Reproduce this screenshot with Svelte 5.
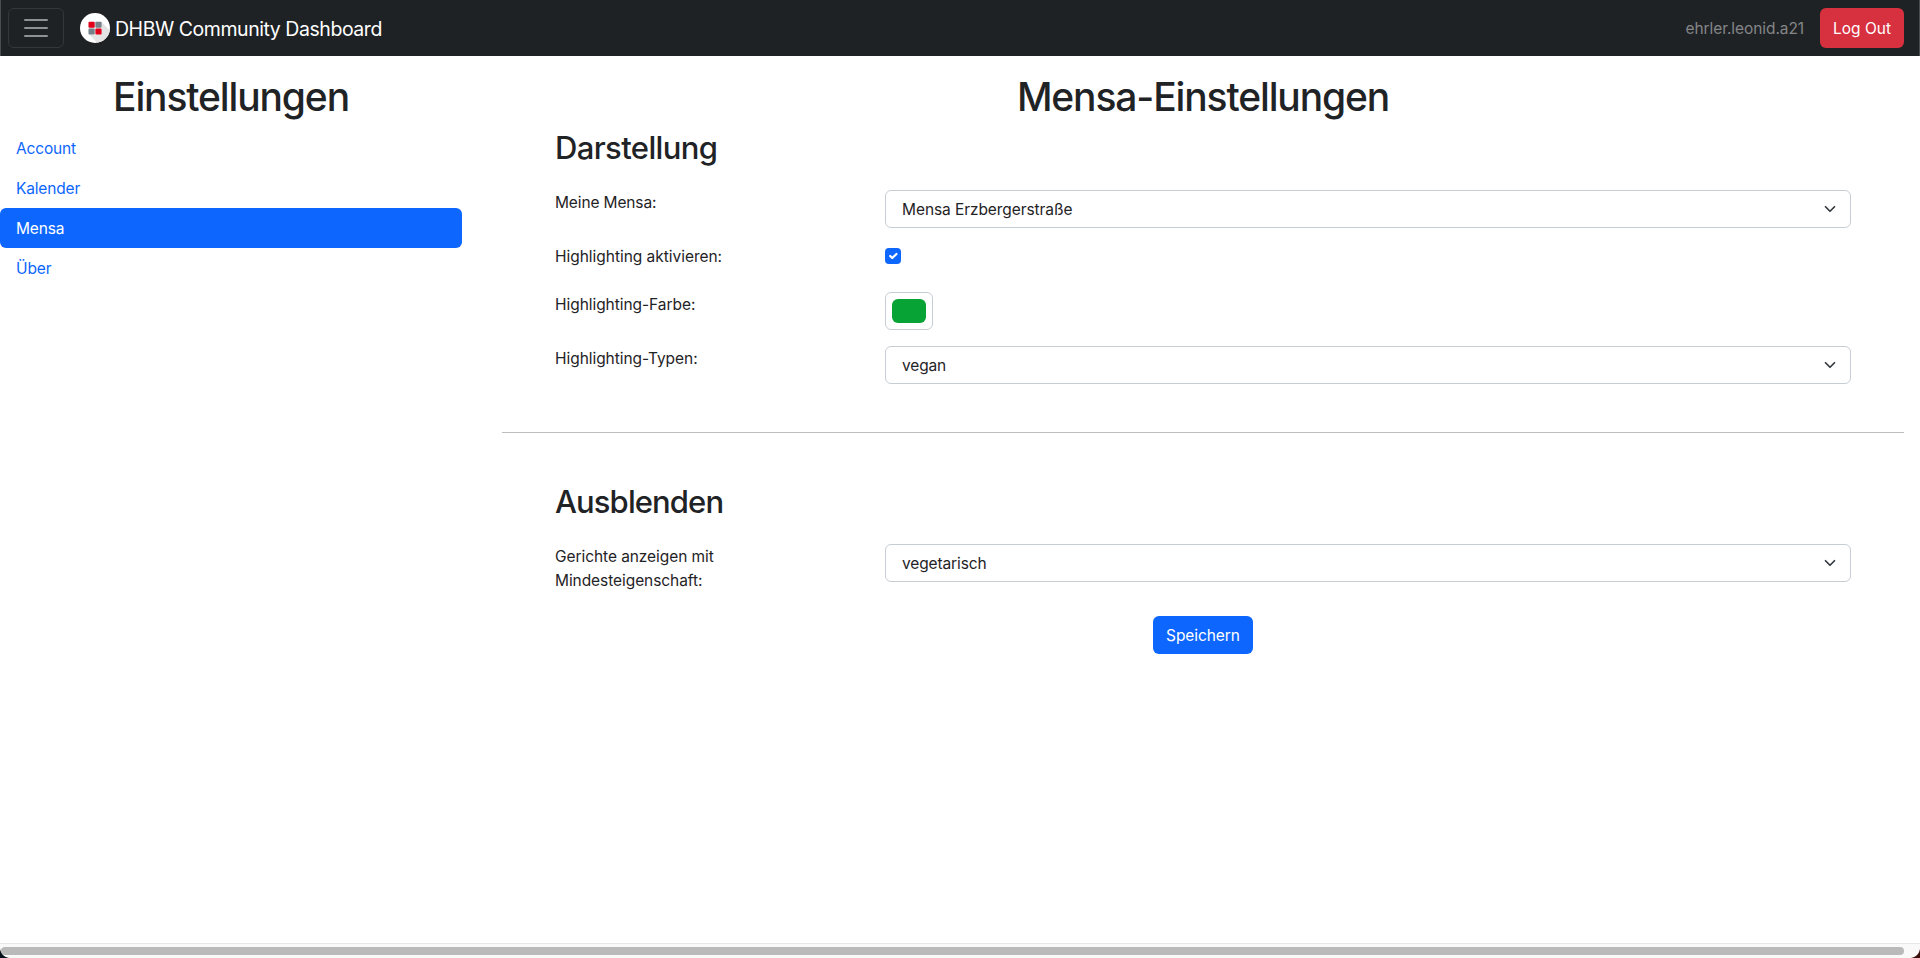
<script>
  const nav = [
    { label: 'Account', ls: -0.16 },
    { label: 'Kalender', ls: -0.17 },
    { label: 'Mensa', ls: -0.18, active: true },
    { label: 'Über', ls: -0.12 }
  ];
</script>

{#snippet select(value, ls)}
  <div class="select" role="combobox" aria-expanded="false" aria-controls="none" tabindex="0">
    <span style="letter-spacing:{ls}px">{value}</span>
    <svg width="16" height="12" viewBox="0 0 16 16" aria-hidden="true">
      <path d="m2 5 6 6 6-6" fill="none" stroke="#343a40" stroke-width="2.3" stroke-linecap="round" stroke-linejoin="round" />
    </svg>
  </div>
{/snippet}

{#snippet label(text, ls)}
  <div class="label" style="letter-spacing:{ls}px">{text}</div>
{/snippet}

<div class="page">
  <header>
    <button class="toggler" aria-label="Menu">
      <svg width="30" height="30" viewBox="0 0 30 30">
        <path d="M4 7h22M4 15h22M4 23h22" stroke="#8f9192" stroke-width="2" stroke-linecap="round" stroke-miterlimit="10" />
      </svg>
    </button>
    <a class="brand" href="#top">
      <svg width="30" height="30" viewBox="0 0 30 30">
        <defs><clipPath id="disc"><circle cx="15" cy="15" r="15" /></clipPath></defs>
        <circle cx="15" cy="15" r="15" fill="#fff" />
        <path clip-path="url(#disc)" d="M21.5 9 L36 23.5 V36 H23.5 L9 21.5Z" fill="#e4e4e4" />
        <rect x="8.6" y="8.8" width="12.9" height="12.6" rx="1" fill="#f1eeee" />
        <rect x="8.5" y="8.7" width="6.2" height="6" rx="1" fill="#e2001a" />
        <rect x="15.4" y="8.7" width="6.2" height="6" rx="1" fill="#76818a" />
        <rect x="8.5" y="15.4" width="6.2" height="6" rx="1" fill="#76818a" />
        <rect x="15.4" y="15.4" width="6.2" height="6" rx="1" fill="#e2001a" />
      </svg>
      <span>DHBW Community Dashboard</span>
    </a>
    <span class="user">ehrler.leonid.a21</span>
    <button class="btn logout">Log Out</button>
  </header>

  <div class="body">
    <aside>
      <h1>Einstellungen</h1>
      <nav>
        {#each nav as item}
          <a href="#{item.label}" class:active={item.active} style="letter-spacing:{item.ls}px">{item.label}</a>
        {/each}
      </nav>
    </aside>

    <main>
      <h1>Mensa-Einstellungen</h1>
      <section>
        <h2>Darstellung</h2>
        <div class="row">
          {@render label('Meine Mensa:', -0.13)}
          {@render select('Mensa Erzbergerstraße', -0.08)}
        </div>
        <div class="row">
          {@render label('Highlighting aktivieren:', -0.03)}
          <div class="check">
            <svg width="16" height="16" viewBox="0 0 20 20">
              <path d="m6.5 10 2.6 2.6 5.2-5.2" fill="none" stroke="#fff" stroke-width="2.8" stroke-linecap="round" stroke-linejoin="round" />
            </svg>
          </div>
        </div>
        <div class="row">
          {@render label('Highlighting-Farbe:', -0.05)}
          <div class="color"><span></span></div>
        </div>
        <div class="row">
          {@render label('Highlighting-Typen:', -0.05)}
          {@render select('vegan', -0.14)}
        </div>
      </section>
      <hr />
      <section>
        <h2 class="hide">Ausblenden</h2>
        <div class="row">
          {@render label('Gerichte anzeigen mit Mindesteigenschaft:', -0.07)}
          {@render select('vegetarisch', -0.12)}
        </div>
      </section>
      <button class="btn save">Speichern</button>
    </main>
  </div>

  <footer><div class="thumb"></div></footer>
  <i class="corner left"></i>
  <i class="corner right"></i>
</div>

<style>
  :global(body) { margin: 0; background: #fff; }
  .page {
    position: relative;
    display: flex;
    flex-direction: column;
    height: 958px;
    overflow: hidden;
    color: #1f2326;
    font: 400 15.5px/24px Inter, sans-serif;
  }
  .page, .page * { box-sizing: border-box; }
  a { text-decoration: none; }
  button { font: inherit; margin: 0; cursor: pointer; }

  header {
    display: flex;
    align-items: center;
    height: 56px;
    padding: 0 16px 0 7px;
    background: #1f2225;
    border-left: 1px solid #4b4e50;
    border-right: 1px solid #4b4e50;
  }
  .toggler {
    display: flex;
    justify-content: center;
    align-items: center;
    width: 56px;
    height: 40px;
    padding: 0;
    background: transparent;
    border: 1px solid #35383b;
    border-radius: 6px;
  }
  .brand {
    display: flex;
    align-items: center;
    gap: 5px;
    margin-left: 16px;
    color: #fff;
    font-size: 19.5px;
    line-height: 30px;
    letter-spacing: -0.45px;
  }
  .brand span { padding-top: 2px; }
  .user {
    margin-left: auto;
    padding-top: 2px;
    color: #848688;
    letter-spacing: -0.08px;
  }
  .btn {
    display: block;
    padding: 2px 0 0;
    border: 1px solid transparent;
    border-radius: 6px;
    color: #fff;
    white-space: nowrap;
  }
  .logout {
    width: 84px;
    height: 40px;
    margin-left: 16px;
    margin-right: -1px;
    background: #d7303f;
  }

  .body { display: flex; flex: 1; }
  aside { width: 462px; padding-top: 16px; }
  h1, h2 { margin: 0; font-weight: 500; }
  h1 {
    height: 56px;
    padding-top: 1px;
    font-size: 39px;
    line-height: 48px;
    text-align: center;
    letter-spacing: -1.14px;
  }
  nav { display: flex; flex-direction: column; }
  nav a {
    height: 40px;
    padding: 9px 16px 7px;
    color: #0d66fd;
    border-radius: 6px;
  }
  nav a.active { background: #0d66fd; color: #fff; }

  main {
    flex: 1;
    margin: 0 16px 0 40px;
    padding-top: 16px;
  }
  section { padding: 0 53px; }
  h2 {
    height: 62px;
    padding-top: 1px;
    font-size: 31px;
    line-height: 38px;
    letter-spacing: -0.62px;
  }
  .hide { letter-spacing: -0.9px; }
  .row {
    display: grid;
    grid-template-columns: 180px 966px;
    justify-content: space-between;
    margin-bottom: 16px;
  }
  .label { padding-top: 1px; }
  .select {
    display: flex;
    justify-content: space-between;
    align-items: center;
    height: 38px;
    padding: 0 12px 0 16px;
    background: #fff;
    border: 1px solid #c7cdd4;
    border-radius: 6px;
  }
  .select span { padding-top: 2px; }
  .check {
    width: 16px;
    height: 16px;
    margin: 4px 0 12px;
    border-radius: 4px;
    background: #0d66fd;
  }
  .check svg { display: block; }
  .color {
    width: 48px;
    height: 38px;
    padding: 6px;
    border: 1px solid #c7cdd4;
    border-radius: 6px;
  }
  .color span {
    display: block;
    height: 24px;
    border-radius: 6px;
    background: #08a335;
  }
  hr {
    height: 1px;
    margin: 48px 0 49px;
    border: 0;
    background: #bcbdbe;
  }
  .row:last-child { margin-bottom: 0; }
  .save {
    width: 100px;
    height: 38px;
    margin: 23px auto 0;
    background: #0d66fd;
    letter-spacing: -0.08px;
  }

  footer {
    height: 15px;
    padding: 3px 16px 0 1px;
    background: #f9f9f9;
    border-top: 1px solid #e7e7e7;
  }
  .thumb {
    height: 8px;
    border-radius: 4px;
    background: #bababa;
  }
  .corner {
    position: absolute;
    bottom: 0;
    width: 10px;
    height: 10px;
  }
  .left {
    left: 0;
    background: radial-gradient(circle at 10px 0, transparent 9.5px, #06101c 10.3px);
  }
  .right {
    right: 0;
    background: radial-gradient(circle at 0 0, transparent 9.5px, #3a0f0c 10.3px);
  }
</style>
